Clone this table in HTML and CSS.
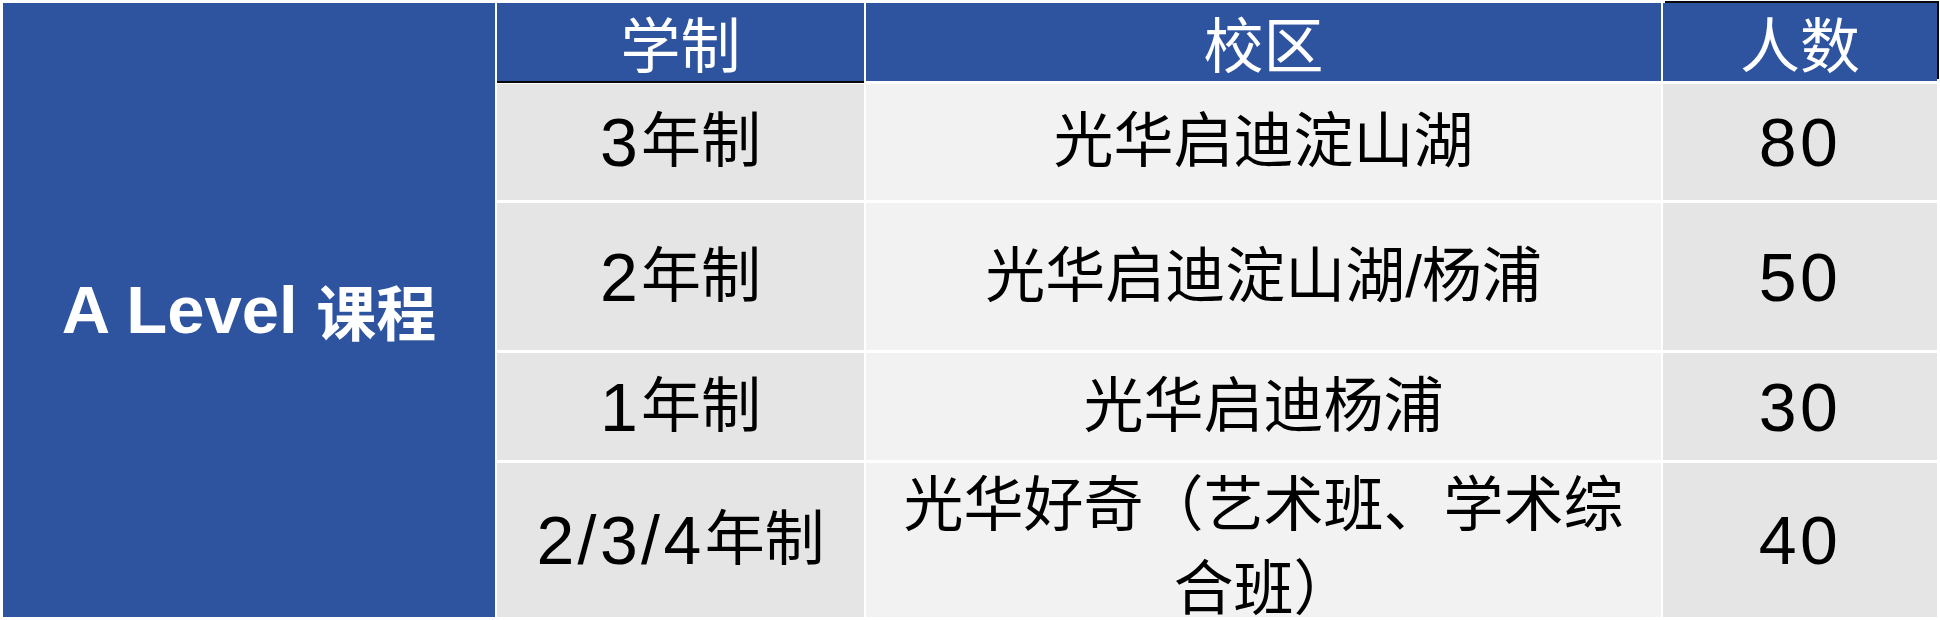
FILE: index.html
```html
<!DOCTYPE html>
<html lang="zh-CN">
<head>
<meta charset="utf-8">
<title>A Level 课程</title>
<link rel="stylesheet" href="styles.css">
</head>
<body>
<div class="table">
  <div class="cell course"><span class="latin">A Level </span><span class="cjk">课程</span></div>
  <div class="cell head head-years">学制</div>
  <div class="cell head">校区</div>
  <div class="cell head head-count">人数</div>

  <div class="cell band"><span class="num">3</span>年制</div>
  <div class="cell light">光华启迪淀山湖</div>
  <div class="cell band count">80</div>

  <div class="cell band"><span class="num">2</span>年制</div>
  <div class="cell light">光华启迪淀山湖/杨浦</div>
  <div class="cell band count">50</div>

  <div class="cell band"><span class="num">1</span>年制</div>
  <div class="cell light">光华启迪杨浦</div>
  <div class="cell band count">30</div>

  <div class="cell band"><span class="num">2/3/4</span>年制</div>
  <div class="cell light multi">光华好奇（艺术班、学术综合班）</div>
  <div class="cell band count">40</div>
</div>
</body>
</html>
```

FILE: styles.css
```css
html, body {
  margin: 0;
  padding: 0;
  background: #ffffff;
}

body {
  width: 1940px;
  height: 620px;
  overflow: hidden;
  font-family: "Liberation Sans", "Noto Sans CJK SC", sans-serif;
}

.table {
  margin: 3px 0 0 3px;
  display: grid;
  grid-template-columns: 492px 367px 795px 274px;
  grid-template-rows: 78px 116px 147px 107px 154px;
  column-gap: 2px;
  row-gap: 3px;
}

.cell {
  display: flex;
  align-items: center;
  justify-content: center;
  text-align: center;
  overflow: hidden;
  font-size: 60px;
  line-height: 84px;
  color: #000;
}

.course {
  grid-row: 1 / 6;
  background: #2e54a0;
  color: #fff;
  font-weight: bold;
}

.course .latin {
  font-family: "Liberation Sans", sans-serif;
  font-size: 67px;
  white-space: pre;
}

.course .cjk {
  font-family: "Noto Sans CJK SC", sans-serif;
  font-size: 60px;
  font-weight: bold;
}

.head {
  background: #2e54a0;
  color: #fff;
  font-family: "Noto Sans CJK SC", sans-serif;
  line-height: 72px;
  overflow: visible;
}

.head-years {
  box-shadow: 0 2px 0 #0a0a0a;
}

.head-count {
  box-shadow: 2px -2px 0 #0a0a0a;
}

.band {
  background: #e5e5e5;
}

.light {
  background: #f2f2f2;
  padding: 0 24px;
}

.num {
  font-family: "Liberation Sans", sans-serif;
  font-size: 68px;
  letter-spacing: 0.05em;
}

.count {
  font-family: "Liberation Sans", sans-serif;
  font-size: 68px;
  letter-spacing: 0.05em;
}

.multi {
  align-items: flex-start;
  padding-top: 1px;
}
```
